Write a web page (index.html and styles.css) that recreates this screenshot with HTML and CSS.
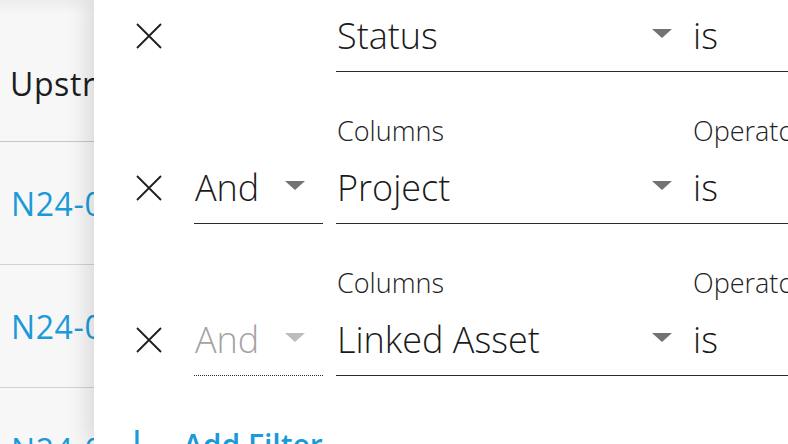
FILE: index.html
```html
<!DOCTYPE html>
<html lang="en">
<head>
<meta charset="utf-8">
<title>Filters</title>
<link rel="stylesheet" href="styles.css">
</head>
<body>
<div class="app">
  <div class="table">
    <div class="th">Upstream</div>
    <div class="tr"><a class="link">N24-00012</a></div>
    <div class="tr"><a class="link">N24-00013</a></div>
    <div class="tr"><a class="link">N24-00014</a></div>
  </div>
  <div class="panel">
    <div class="filters">
      <div class="filter">
        <div class="remove"><svg viewBox="0 0 26 26" width="26" height="26"><path d="M1 1 L25 25 M25 1 L1 25" stroke="#1e1e1e" stroke-width="1.8" fill="none"/></svg></div>
        <div class="cell"></div>
        <div class="cell">
          <div class="label">Columns</div>
          <div class="field col-field"><span>Status</span><i class="caret"></i></div>
        </div>
        <div class="cell">
          <div class="label op-label">Operator</div>
          <div class="field op-field"><span>is</span></div>
        </div>
      </div>
      <div class="filter">
        <div class="remove"><svg viewBox="0 0 26 26" width="26" height="26"><path d="M1 1 L25 25 M25 1 L1 25" stroke="#1e1e1e" stroke-width="1.8" fill="none"/></svg></div>
        <div class="cell and-cell">
          <div class="label"></div>
          <div class="field and-field"><span>And</span><i class="caret"></i></div>
        </div>
        <div class="cell">
          <div class="label">Columns</div>
          <div class="field col-field"><span>Project</span><i class="caret"></i></div>
        </div>
        <div class="cell">
          <div class="label op-label">Operator</div>
          <div class="field op-field"><span>is</span></div>
        </div>
      </div>
      <div class="filter">
        <div class="remove"><svg viewBox="0 0 26 26" width="26" height="26"><path d="M1 1 L25 25 M25 1 L1 25" stroke="#1e1e1e" stroke-width="1.8" fill="none"/></svg></div>
        <div class="cell and-cell">
          <div class="label"></div>
          <div class="field and-field disabled"><span>And</span><i class="caret"></i></div>
        </div>
        <div class="cell">
          <div class="label">Columns</div>
          <div class="field col-field"><span>Linked Asset</span><i class="caret"></i></div>
        </div>
        <div class="cell">
          <div class="label op-label">Operator</div>
          <div class="field op-field"><span>is</span></div>
        </div>
      </div>
    </div>
    <div class="add-filter">
      <svg viewBox="0 0 32 32" width="32" height="32"><path d="M16 0 V32 M0 16 H32" stroke="#1a9ad8" stroke-width="3.2" fill="none"/></svg>
      <span>Add Filter</span>
    </div>
  </div>
</div>
</body>
</html>
```

FILE: styles.css
```css
html, body {
  margin: 0;
  padding: 0;
  width: 788px;
  height: 444px;
  overflow: hidden;
  background: #ffffff;
  font-family: "Open Sans", "Noto Sans", sans-serif;
}

.app {
  display: flex;
  width: 788px;
  height: 444px;
  overflow: hidden;
}

.table {
  flex: none;
  width: 94px;
  background: linear-gradient(to bottom, #ececec 0, #f7f7f7 14px, #f7f7f7 100%);
  overflow: hidden;
  white-space: nowrap;
}

.th {
  height: 142px;
  box-sizing: border-box;
  padding: 26px 0 0 10px;
  display: flex;
  align-items: center;
  font-size: 32px;
  letter-spacing: 0.6px;
  color: #1d1d1d;
  border-bottom: 1px solid #c6c6c6;
}

.tr {
  height: 123px;
  box-sizing: border-box;
  display: flex;
  align-items: center;
  padding-left: 11px;
  border-bottom: 1px solid #d2d2d2;
}

.link {
  font-size: 32px;
  letter-spacing: 0.6px;
  color: #1a9ad8;
}

.panel {
  flex: 1;
  position: relative;
  z-index: 1;
  background: #ffffff;
  box-shadow: -6px 0 22px rgba(0, 0, 0, 0.13);
  padding-left: 36px;
  overflow: hidden;
}

.filters {
  margin-top: -36px;
  display: flex;
  flex-direction: column;
  gap: 44px;
}

.filter {
  display: grid;
  grid-template-columns: 64px 142px 346px 220px;
  align-items: end;
}

.remove {
  height: 26px;
  margin: 0 0 23px 6px;
}

.remove svg {
  display: block;
}

.cell {
  display: flex;
  flex-direction: column;
}

.and-cell {
  padding-right: 13px;
}

.label {
  height: 30px;
  line-height: 30px;
  font-size: 27px;
  font-weight: 300;
  color: #222;
  padding-left: 1px;
  margin-bottom: 18px;
  white-space: nowrap;
}

.op-label {
  padding-left: 11px;
}

.field {
  display: flex;
  align-items: center;
  justify-content: space-between;
  height: 48px;
  line-height: 48px;
  padding-bottom: 11px;
  font-size: 36px;
  font-weight: 300;
  color: #1a1a1a;
  border-bottom: 1px solid #2a2a2a;
  white-space: nowrap;
}

.col-field {
  padding-left: 1px;
  padding-right: 10px;
}

.and-field {
  padding-left: 1px;
  padding-right: 18px;
}

.op-field {
  padding-left: 11px;
}

.caret {
  flex: none;
  width: 0;
  height: 0;
  border-left: 10px solid transparent;
  border-right: 10px solid transparent;
  border-top: 9px solid #737373;
  margin-top: -6px;
}

.disabled {
  color: #a3a3a3;
  border-bottom: 1px dotted #2a2a2a;
}

.disabled .caret {
  border-top-color: #bdbdbd;
}

.add-filter {
  display: flex;
  align-items: flex-start;
  gap: 30px;
  margin: 51px 0 0 -9px;
  font-size: 30px;
  font-weight: 600;
  color: #1a9ad8;
  line-height: 36px;
  white-space: nowrap;
}

.add-filter svg {
  display: block;
  flex: none;
  margin-top: 3px;
}
```
